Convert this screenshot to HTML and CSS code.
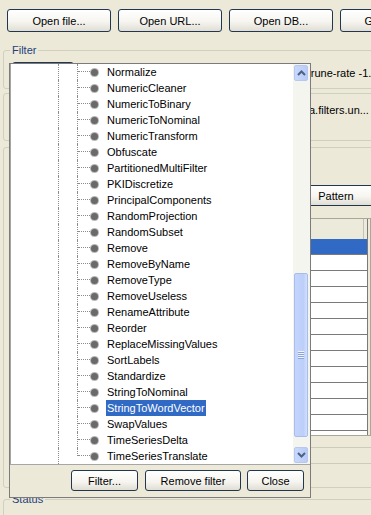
FILE: index.html
```html
<!doctype html>
<html lang="en">
<head>
    <meta charset="UTF-8">
    <title>Preprocess</title>
    <link rel="stylesheet" href="styles.css">
</head>
<body>
<div class="toolbar">
    <button class="btn">Open file...</button>
    <button class="btn">Open URL...</button>
    <button class="btn">Open DB...</button>
    <button class="btn">Generate...</button>
</div>

<div class="group filter-group">
    <div class="group-title">Filter</div>
    <div class="filter-row">
        <button class="btn choose">Choose</button>
        <span class="filter-head">StringToWordVector -R first-last -W 1000</span>
        <span class="filter-tail">-prune-rate -1.0 -N 0</span>
    </div>
</div>

<div class="group relation-group">
    <div class="group-title">Current relation</div>
    <div class="info-row first">
        <span class="rel-label">Relation:</span>
        <span class="rel-head">reuters-wek</span>
        <span class="rel-tail">a.filters.un...</span>
    </div>
    <div class="info-row">
        <span class="rel-label">Instances:</span>
        <span>1000</span>
    </div>
</div>

<div class="group attr-group">
    <div class="group-title">Attributes</div>
    <div class="select-row">
        <button class="btn">All</button>
        <button class="btn">None</button>
        <button class="btn">Invert</button>
        <button class="btn">Pattern</button>
    </div>
    <div class="table-pane">
        <div class="attr-table">
            <div class="thead">
                <span class="th no">No.</span>
                <span class="th chk"></span>
                <span class="th name">Name</span>
            </div>
            <div class="trow selected"><span class="td no">1</span><span class="td chk"></span><span class="td">text</span></div>
            <div class="trow"><span class="td no">2</span><span class="td chk"></span><span class="td">class</span></div>
            <div class="trow"><span class="td no">3</span><span class="td chk"></span><span class="td">about</span></div>
            <div class="trow"><span class="td no">4</span><span class="td chk"></span><span class="td">after</span></div>
            <div class="trow"><span class="td no">5</span><span class="td chk"></span><span class="td">also</span></div>
            <div class="trow"><span class="td no">6</span><span class="td chk"></span><span class="td">and</span></div>
            <div class="trow"><span class="td no">7</span><span class="td chk"></span><span class="td">april</span></div>
            <div class="trow"><span class="td no">8</span><span class="td chk"></span><span class="td">are</span></div>
            <div class="trow"><span class="td no">9</span><span class="td chk"></span><span class="td">bank</span></div>
            <div class="trow"><span class="td no">10</span><span class="td chk"></span><span class="td">billion</span></div>
            <div class="trow"><span class="td no">11</span><span class="td chk"></span><span class="td">company</span></div>
            <div class="trow"><span class="td no">12</span><span class="td chk"></span><span class="td">corp</span></div>
            <div class="trow"><span class="td no">13</span><span class="td chk"></span><span class="td">dlrs</span></div>
        </div>
        <div class="tscroll"></div>
    </div>
    <div class="remove-row">Remove</div>
</div>

<div class="group status-group">
    <div class="group-title">Status</div>
</div>

<div class="popup">
    <div class="tree-pane">
        <ul class="tree">
            <li class="node"><span class="guide"></span><span class="guide inner"></span><span class="branch"></span><span class="leaf"></span><span class="label">Normalize</span></li>
            <li class="node"><span class="guide"></span><span class="guide inner"></span><span class="branch"></span><span class="leaf"></span><span class="label">NumericCleaner</span></li>
            <li class="node"><span class="guide"></span><span class="guide inner"></span><span class="branch"></span><span class="leaf"></span><span class="label">NumericToBinary</span></li>
            <li class="node"><span class="guide"></span><span class="guide inner"></span><span class="branch"></span><span class="leaf"></span><span class="label">NumericToNominal</span></li>
            <li class="node"><span class="guide"></span><span class="guide inner"></span><span class="branch"></span><span class="leaf"></span><span class="label">NumericTransform</span></li>
            <li class="node"><span class="guide"></span><span class="guide inner"></span><span class="branch"></span><span class="leaf"></span><span class="label">Obfuscate</span></li>
            <li class="node"><span class="guide"></span><span class="guide inner"></span><span class="branch"></span><span class="leaf"></span><span class="label">PartitionedMultiFilter</span></li>
            <li class="node"><span class="guide"></span><span class="guide inner"></span><span class="branch"></span><span class="leaf"></span><span class="label">PKIDiscretize</span></li>
            <li class="node"><span class="guide"></span><span class="guide inner"></span><span class="branch"></span><span class="leaf"></span><span class="label">PrincipalComponents</span></li>
            <li class="node"><span class="guide"></span><span class="guide inner"></span><span class="branch"></span><span class="leaf"></span><span class="label">RandomProjection</span></li>
            <li class="node"><span class="guide"></span><span class="guide inner"></span><span class="branch"></span><span class="leaf"></span><span class="label">RandomSubset</span></li>
            <li class="node"><span class="guide"></span><span class="guide inner"></span><span class="branch"></span><span class="leaf"></span><span class="label">Remove</span></li>
            <li class="node"><span class="guide"></span><span class="guide inner"></span><span class="branch"></span><span class="leaf"></span><span class="label">RemoveByName</span></li>
            <li class="node"><span class="guide"></span><span class="guide inner"></span><span class="branch"></span><span class="leaf"></span><span class="label">RemoveType</span></li>
            <li class="node"><span class="guide"></span><span class="guide inner"></span><span class="branch"></span><span class="leaf"></span><span class="label">RemoveUseless</span></li>
            <li class="node"><span class="guide"></span><span class="guide inner"></span><span class="branch"></span><span class="leaf"></span><span class="label">RenameAttribute</span></li>
            <li class="node"><span class="guide"></span><span class="guide inner"></span><span class="branch"></span><span class="leaf"></span><span class="label">Reorder</span></li>
            <li class="node"><span class="guide"></span><span class="guide inner"></span><span class="branch"></span><span class="leaf"></span><span class="label">ReplaceMissingValues</span></li>
            <li class="node"><span class="guide"></span><span class="guide inner"></span><span class="branch"></span><span class="leaf"></span><span class="label">SortLabels</span></li>
            <li class="node"><span class="guide"></span><span class="guide inner"></span><span class="branch"></span><span class="leaf"></span><span class="label">Standardize</span></li>
            <li class="node"><span class="guide"></span><span class="guide inner"></span><span class="branch"></span><span class="leaf"></span><span class="label">StringToNominal</span></li>
            <li class="node selected"><span class="guide"></span><span class="guide inner"></span><span class="branch"></span><span class="leaf"></span><span class="label">StringToWordVector</span></li>
            <li class="node"><span class="guide"></span><span class="guide inner"></span><span class="branch"></span><span class="leaf"></span><span class="label">SwapValues</span></li>
            <li class="node"><span class="guide"></span><span class="guide inner"></span><span class="branch"></span><span class="leaf"></span><span class="label">TimeSeriesDelta</span></li>
            <li class="node last"><span class="guide"></span><span class="guide inner"></span><span class="branch"></span><span class="leaf"></span><span class="label">TimeSeriesTranslate</span></li>
        </ul>
        <div class="vbar">
            <div class="arrow">
                <svg width="9" height="6" viewBox="0 0 9 6"><polyline points="1,5 4.5,1.5 8,5" fill="none" stroke="#4d6185" stroke-width="2"/></svg>
            </div>
            <div class="thumb"><span class="grip"></span></div>
            <div class="arrow down">
                <svg width="9" height="6" viewBox="0 0 9 6"><polyline points="1,1 4.5,4.5 8,1" fill="none" stroke="#4d6185" stroke-width="2"/></svg>
            </div>
        </div>
    </div>
    <div class="popup-bar">
        <button class="btn b-filter">Filter...</button>
        <button class="btn b-remove">Remove filter</button>
        <button class="btn b-close">Close</button>
    </div>
</div>
</body>
</html>
```

FILE: styles.css
```css
* {
    margin: 0;
    padding: 0;
    box-sizing: border-box;
}

ul {
    list-style: none;
}

body {
    position: relative;
    width: 371px;
    height: 515px;
    overflow: hidden;
    background: #ece9d8;
    font: 11px "Liberation Sans", Arial, sans-serif;
    color: #000;
}

.btn {
    flex-shrink: 0;
    height: 23px;
    padding: 0;
    border: 1px solid #22364f;
    border-radius: 3px;
    background: linear-gradient(#ffffff, #f6f5f0 55%, #e0ded4);
    font: 11px "Liberation Sans", Arial, sans-serif;
    color: #000;
}

/* top buttons */
.toolbar {
    display: flex;
    gap: 7px;
    padding: 9px 0 0 7px;
}

.toolbar .btn {
    width: 104px;
}

/* titled boxes */
.group {
    margin: 0 -30px 0 3px;
    border: 1px solid #d0d0bf;
    border-radius: 3px;
}

.group-title {
    display: table;
    margin: -7px 0 0 6px;
    padding: 0 2px;
    line-height: 13px;
    background: #ece9d8;
    color: #1f3f7a;
}

.filter-group {
    margin-top: 18px;
    padding-bottom: 4px;
}

.filter-row {
    display: flex;
    align-items: center;
    height: 22px;
    margin-top: 5px;
    padding-left: 8px;
    white-space: nowrap;
}

.filter-row .choose {
    width: 62px;
    height: 22px;
}

.filter-head {
    flex-shrink: 0;
    width: 218px;
    margin-left: 6px;
    overflow: hidden;
    text-align: right;
}

.filter-tail {
    flex-shrink: 0;
    margin-left: 3px;
}

.relation-group {
    margin-top: 4px;
    padding-bottom: 6px;
}

.info-row {
    display: flex;
    height: 16px;
    line-height: 16px;
    padding-left: 8px;
    white-space: nowrap;
}

.info-row.first {
    margin-top: 2px;
}

.rel-label {
    flex-shrink: 0;
    width: 60px;
}

.rel-head {
    flex-shrink: 0;
    width: 237px;
    overflow: hidden;
    text-align: right;
}

.rel-tail {
    flex-shrink: 0;
}

.attr-group {
    margin-top: 6px;
    padding-bottom: 23px;
}

.select-row {
    display: flex;
    gap: 4px;
    margin-top: 31px;
    padding-left: 26px;
}

.select-row .btn {
    width: 84px;
    height: 21px;
}

.table-pane {
    display: flex;
    height: 218px;
    margin: 12px 0 0 8px;
    border: 1px solid #a9a797;
    border-right: none;
    overflow: hidden;
}

.attr-table {
    flex-shrink: 0;
    width: 355px;
    border-right: 1px solid #7a7a7a;
    background: #fff;
}

.thead {
    display: flex;
    height: 20px;
    background: #ebeadb;
}

.th {
    line-height: 20px;
    padding-left: 4px;
    border-right: 1px solid #c5c2b2;
}

.no {
    width: 34px;
}

.chk {
    width: 20px;
}

.th.name {
    width: 297px;
}

.trow {
    display: flex;
    height: 16px;
    line-height: 15px;
    border-bottom: 1px solid #7a7a7a;
}

.td {
    padding-left: 4px;
}

.trow.selected {
    background: #316ac5;
    color: #fff;
}

.tscroll {
    flex-shrink: 0;
    width: 17px;
    margin-left: 2px;
    border-left: 1px solid #a8a89a;
    background: #f4f3ee;
}

.remove-row {
    height: 17px;
    margin: 11px 0 0 8px;
    padding-left: 120px;
    line-height: 15px;
    border-top: 1px solid #cfcbbb;
    border-bottom: 1px solid #cfcbbb;
}

.status-group {
    margin-top: 11px;
    height: 40px;
}

/* filter chooser popup */
.popup {
    position: absolute;
    left: 9px;
    top: 63px;
    z-index: 10;
    display: flex;
    flex-direction: column;
    width: 302px;
    height: 435px;
    border: 1px solid #7b7b7b;
    background: #ece9d8;
}

.tree-pane {
    display: flex;
    height: 401px;
    border-left: 1px solid #a6a6a6;
    border-bottom: 1px solid #a6a6a6;
    background: #fff;
}

.tree {
    width: 282px;
    overflow: hidden;
}

.node {
    display: flex;
    height: 16px;
}

.guide {
    width: 48px;
    border-right: 1px dotted #8c8c8c;
}

.guide.inner {
    width: 19px;
}

.node.last .guide.inner {
    height: 8px;
}

.branch {
    width: 12px;
    height: 8px;
    border-bottom: 1px dotted #8c8c8c;
}

.leaf {
    display: flex;
    align-items: center;
    width: 16px;
}

.leaf::before {
    content: "";
    width: 7px;
    height: 7px;
    margin-left: 1px;
    border-radius: 50%;
    background: #6a6a6a;
    box-shadow: 0 0 0 1px #b8b8b8;
}

.label {
    padding: 0 1px;
    line-height: 16px;
    white-space: nowrap;
}

.node.selected .label {
    background: #316ac5;
    color: #fff;
}

.vbar {
    display: flex;
    flex-direction: column;
    width: 17px;
    padding: 1px 2px 1px 1px;
    background: #f5f5f0;
}

.arrow {
    display: flex;
    align-items: center;
    justify-content: center;
    height: 16px;
    border: 1px solid #b6c7f0;
    border-radius: 2px;
    background: linear-gradient(90deg, #cad8fb, #b9ccf7);
}

.arrow.down {
    margin-top: 10px;
}

.thumb {
    display: flex;
    align-items: center;
    justify-content: center;
    height: 164px;
    margin-top: 192px;
    border: 1px solid #a9bdec;
    border-radius: 2px;
    background: linear-gradient(90deg, #c5d5fc, #bccff9 70%, #d3e0fd);
}

.grip {
    width: 6px;
    height: 8px;
    background: repeating-linear-gradient(#eef3ff 0 1px, #8aa3d8 1px 2px);
}

.popup-bar {
    display: flex;
    justify-content: flex-end;
    height: 32px;
    padding: 5px 6px 0 0;
}

.popup-bar .btn {
    height: 21px;
}

.b-filter {
    width: 67px;
}

.b-remove {
    width: 96px;
    margin-left: 7px;
}

.b-close {
    width: 57px;
    margin-left: 6px;
}
```
